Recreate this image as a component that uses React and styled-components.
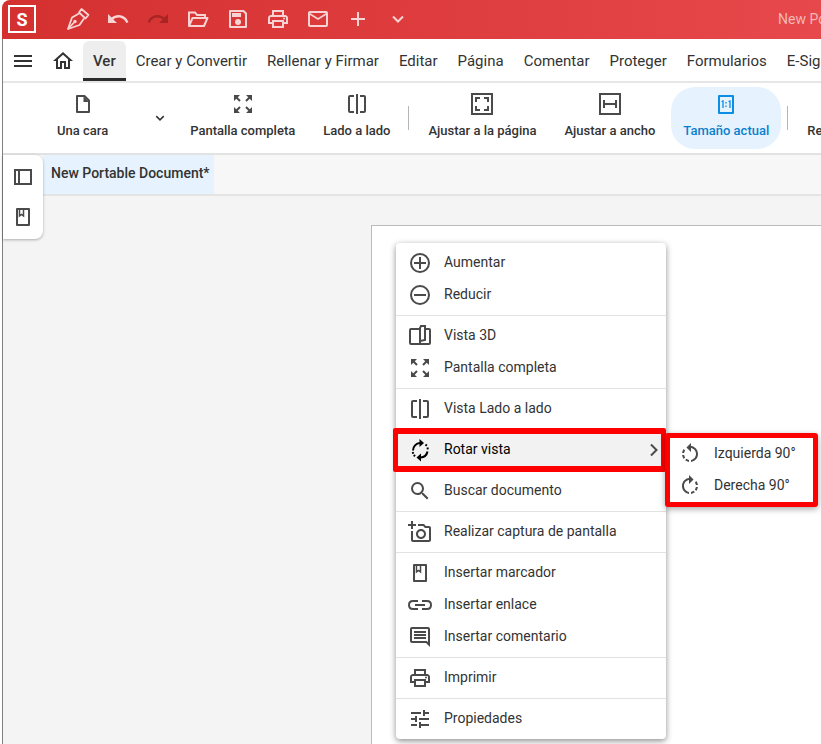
import styled, { createGlobalStyle, css } from "styled-components";
import {
  MdOutlineAddAPhoto,
  MdOutlineComment,
  MdOutlineHome,
  MdOutlineMail,
  MdOutlinePrint,
  MdRedo,
  MdRotateLeft,
  MdRotateRight,
  MdSearch,
  MdTune,
  MdUndo,
} from "react-icons/md";

const GlobalStyle = createGlobalStyle`
  * {
    box-sizing: border-box;
  }

  body {
    margin: 0;
    background: #ffffff;
    color: #333333;
    font-family: Roboto, "Liberation Sans", sans-serif;
    font-size: 14px;
    overflow: hidden;
  }

  button {
    margin: 0;
    padding: 0;
    border: 0;
    background: none;
    color: inherit;
    font: inherit;
    white-space: nowrap;
    cursor: pointer;
  }

  svg {
    display: block;
    flex: none;
  }
`;

/* ---------- icons ---------- */

const Svg = ({ size = 24, width = 2, children }) => (
  <svg
    width={size}
    height={size}
    viewBox="0 0 24 24"
    fill="none"
    stroke="currentColor"
    strokeWidth={width}
    aria-hidden="true"
  >
    {children}
  </svg>
);

const PenIcon = () => (
  <Svg width={1.8}>
    <path d="M15.5 2L22.5 8L19.500 11.500L13 5.500Z" strokeLinejoin="round" />
    <path d="M13 6.500L6 10.500L2 22L13.500 18L18 11.500" strokeLinejoin="round" />
    <path d="M2 22L8 15.500" />
    <circle cx="9" cy="14.5" r="1.700" fill="currentColor" stroke="none" />
  </Svg>
);

const FolderIcon = () => (
  <Svg>
    <path d="M3 19V5.5H9L11 8H19V11" />
    <path d="M3 19L6.5 11H21.5L18 19Z" strokeLinejoin="round" />
  </Svg>
);

const SaveIcon = () => (
  <Svg>
    <path d="M4 4H17.5L20 6.5V20H4Z" strokeLinejoin="round" />
    <path d="M6 6H15V10H6Z" fill="currentColor" stroke="none" />
    <circle cx="12" cy="15" r="3" fill="currentColor" stroke="none" />
  </Svg>
);

const PlusIcon = () => (
  <Svg>
    <path d="M12 5V19M5 12H19" />
  </Svg>
);

const ChevronDown = ({ size, width }) => (
  <Svg size={size} width={width}>
    <path d="M7 9.5L12 14.5L17 9.5" />
  </Svg>
);

const ChevronRight = () => (
  <Svg>
    <path d="M9 6.5L14.5 12L9 17.5" />
  </Svg>
);

const HamburgerIcon = () => (
  <Svg>
    <path d="M3 7H21M3 12H21M3 17H21" />
  </Svg>
);

const PageIcon = () => (
  <Svg>
    <path d="M6 4H13.5L18 8.5V20H6Z" strokeLinejoin="round" />
    <path d="M12.5 4V10H18Z" fill="currentColor" stroke="none" />
  </Svg>
);

const ExpandIcon = () => (
  <Svg>
    <path
      d="M3 3H9L3 9ZM21 3V9L15 3ZM3 21V15L9 21ZM21 21H15L21 15Z"
      fill="currentColor"
      stroke="none"
    />
    <path d="M5 5L9 9M19 5L15 9M5 19L9 15M19 19L15 15" />
  </Svg>
);

const SideIcon = () => (
  <Svg>
    <path d="M9 4H5Q4 4 4 5V19Q4 20 5 20H9M15 4H19Q20 4 20 5V19Q20 20 19 20H15" />
    <path d="M12 2V22" />
  </Svg>
);

const FitPageIcon = () => (
  <Svg>
    <path d="M2 2H22V22H2Z" />
    <path d="M6 10V6H10M14 6H18V10M18 14V18H14M10 18H6V14" />
  </Svg>
);

const FitWidthIcon = () => (
  <Svg>
    <path d="M2 2H22V22H2Z" />
    <path d="M6 8V16M18 8V16M6 12H18" />
  </Svg>
);

const ActualSizeIcon = () => (
  <Svg>
    <path d="M5 4H19V21H5Z" strokeLinejoin="round" />
    <path d="M7.5 9.5L9 9V16M14.5 9.5L16 9V16" strokeWidth="1.3" />
    <path d="M12 10V11.5M12 13.5V15" strokeWidth="1.3" />
  </Svg>
);

const ReflowIcon = () => (
  <Svg>
    <path d="M4 6H20M4 12H20M4 18H13" />
  </Svg>
);

const PanelIcon = () => (
  <Svg>
    <path d="M4 5H20V19H4Z" />
    <path d="M8 5V19" />
  </Svg>
);

const BookmarkIcon = () => (
  <Svg>
    <path d="M6 4H18V20H6Z" strokeLinejoin="round" />
    <path d="M8.5 5V11L10.5 9.5L12.5 11V5" strokeWidth="1.5" />
  </Svg>
);

const LinkIcon = () => (
  <Svg>
    <path d="M10 8H5Q1 8 1 12Q1 16 5 16H10M14 8H19Q23 8 23 12Q23 16 19 16H14" />
    <path d="M7 12H17" />
  </Svg>
);

const ZoomInIcon = () => (
  <Svg>
    <circle cx="12" cy="12" r="9" />
    <path d="M12 6V18M6 12H18" />
  </Svg>
);

const ZoomOutIcon = () => (
  <Svg>
    <circle cx="12" cy="12" r="9" />
    <path d="M6 12H18" />
  </Svg>
);

const View3dIcon = () => (
  <Svg>
    <path d="M12 5H3Q2 5 2 6V19Q2 20 3 20H21Q22 20 22 19V6Q22 5 21 5H18" />
    <path d="M12 20V4L13 2H17V16L12 17" />
  </Svg>
);

const RotateIcon = () => (
  <Svg width={2}>
    <path d="M5 12.5A7.5 7.5 0 0 1 12 5" />
    <path d="M11.5 1L16 5L11.5 9Z" fill="currentColor" stroke="none" />
    <path d="M19.5 13.5A7.5 7.5 0 0 1 12.5 19.5" />
    <path d="M13 15.500L8.500 19.500L13 23.500Z" fill="currentColor" stroke="none" />
    <path d="M17.500 6.500L18.800 7.800M19.500 9.500L19.800 11.300M4.700 14L5.200 15.800M5.800 17L7 18.300" />
  </Svg>
);

/* ---------- title bar ---------- */

const Window = styled.div`
  min-height: 100vh;
  margin-left: 2px;
  display: flex;
  flex-direction: column;
`;

const TitleBar = styled.header`
  height: 39px;
  padding: 0 0 1px 6px;
  display: flex;
  align-items: center;
  border-top-left-radius: 8px;
  background: linear-gradient(90deg, #d43030, #e7484b);
  color: #f9d3d3;
  overflow: hidden;
`;

const Logo = styled.div`
  width: 28px;
  height: 28px;
  margin-right: 22px;
  flex: none;
  display: flex;
  align-items: center;
  justify-content: center;
  border: 2px solid #ffffff;
  color: #ffffff;
  font-size: 18px;
  font-weight: 700;
`;

const TitleButton = styled.button`
  width: 40px;
  height: 38px;
  flex: none;
  display: flex;
  align-items: center;
  justify-content: center;
  ${(props) => props.disabled && "color: #a92525;"}
`;

const FileName = styled.span`
  margin-left: 360px;
  white-space: nowrap;
  color: #f4b6b7;
`;

/* ---------- menu bar ---------- */

const Body = styled.div`
  flex: 1;
  display: flex;
  flex-direction: column;
  border-left: 1px solid #808080;
`;

const MenuBar = styled.nav`
  height: 44px;
  padding-top: 2px;
  display: flex;
  border-bottom: 2px solid #e6e6e6;
  overflow: hidden;
`;

const MenuIconButton = styled.button`
  width: 40px;
  height: 40px;
  padding: 0 8px;
  flex: none;
  display: flex;
  align-items: center;
`;

const MenuTab = styled.button`
  height: 40px;
  padding: 0 10px;
  flex: none;
  font-size: 15px;

  ${(props) =>
    props.$active &&
    css`
      border-bottom: 3px solid #2b2b2b;
      border-radius: 6px 6px 0 0;
      padding-top: 2px;
      background: #eeeeee;
      font-weight: 500;
    `}
`;

/* ---------- ribbon ---------- */

const Ribbon = styled.div`
  height: 72px;
  padding: 4px 0 4px 42px;
  display: flex;
  align-items: center;
  gap: 4px;
  border-bottom: 2px solid #e2e2e2;
  overflow: hidden;
`;

const Tool = styled.button`
  height: 62px;
  padding: 5px 12px 0;
  flex: none;
  display: flex;
  flex-direction: column;
  align-items: center;
  gap: 7px;
  border-radius: 24px;
  font-size: 13px;
  font-weight: 500;
  line-height: 16px;

  svg {
    color: #4a4a4a;
  }

  ${(props) =>
    props.$active &&
    css`
      background: #e6f3fe;
      color: #0a7fce;

      svg {
        color: #0a8ee6;
      }
    `}
`;

const ToolChevron = styled.button`
  width: 50px;
  padding-left: 27px;
  flex: none;
`;

const Divider = styled.span`
  width: 1px;
  height: 24px;
  margin: 0 3px 0 2px;
  flex: none;
  background: #b5b5b5;
`;

/* ---------- document area ---------- */

const Workspace = styled.div`
  flex: 1;
  display: flex;
  flex-direction: column;
  position: relative;
  background: #f4f4f4;
`;

const DocumentTabs = styled.div`
  padding-left: 40px;
  display: flex;
  border-bottom: 2px solid #e4e4e4;
  background: #f7f7f7;
`;

const DocumentTab = styled.button`
  height: 39px;
  padding: 0 4px 4px 8px;
  background: #e6f3fe;
  font-weight: 500;
`;

const SidePanel = styled.aside`
  position: absolute;
  top: 0;
  left: 0;
  width: 40px;
  height: 84px;
  padding: 2px 8px;
  display: flex;
  flex-direction: column;
  border-radius: 0 8px 8px 0;
  background: #ffffff;
  color: #4a4a4a;
  box-shadow: 0 1px 3px rgba(0, 0, 0, 0.3);
`;

const SideButton = styled.button`
  height: 40px;
`;

const Paper = styled.main`
  flex: 1;
  margin: 29px 0 0 368px;
  padding: 17px 0 0 24px;
  border: solid #bbbbbb;
  border-width: 1px 0 0 1px;
  background: #ffffff;
`;

/* ---------- context menu ---------- */

const ContextMenu = styled.div`
  width: 270px;
  border-radius: 4px;
  background: #ffffff;
  box-shadow: 0 2px 6px rgba(0, 0, 0, 0.45);
`;

const MenuGroup = styled.div`
  padding: 4px 0;

  & + & {
    border-top: 1px solid #e2e2e2;
  }
`;

const ItemWrap = styled.div`
  position: relative;
`;

const MenuItem = styled.button`
  width: 100%;
  height: 32px;
  padding-left: 12px;
  display: flex;
  align-items: center;
  gap: 12px;
  text-align: left;

  svg {
    color: #4a4a4a;
  }

  ${(props) =>
    props.$active &&
    css`
      background: #f2f2f2;
      color: #000000;

      svg:first-child {
        color: #000000;
      }
    `}
`;

const ItemLabel = styled.span`
  flex: 1;
  padding-bottom: 2px;
`;

const Highlight = styled.div`
  position: absolute;
  inset: -6px 0 -6px -3px;
  border: solid #ff0000;
  border-width: 6px 5px;
  border-radius: 2px;
  pointer-events: none;
`;

const SubMenu = styled.div`
  position: absolute;
  top: -1px;
  left: 269px;
  width: 153px;
  padding-left: 8px;
  border: 5px solid #ff0000;
  border-radius: 3px;
  background: #ffffff;
  box-shadow: 0 2px 6px rgba(0, 0, 0, 0.35);

  ${MenuItem} {
    padding-left: 0;
  }
`;

const tabs = [
  "Ver",
  "Crear y Convertir",
  "Rellenar y Firmar",
  "Editar",
  "Página",
  "Comentar",
  "Proteger",
  "Formularios",
  "E-Sign",
];

const groups = [
  [
    { label: "Aumentar", icon: <ZoomInIcon /> },
    { label: "Reducir", icon: <ZoomOutIcon /> },
  ],
  [
    { label: "Vista 3D", icon: <View3dIcon /> },
    { label: "Pantalla completa", icon: <ExpandIcon /> },
  ],
  [{ label: "Vista Lado a lado", icon: <SideIcon /> }],
  [
    {
      label: "Rotar vista",
      icon: <RotateIcon />,
      children: [
        { label: "Izquierda 90°", icon: <MdRotateLeft size={24} /> },
        { label: "Derecha 90°", icon: <MdRotateRight size={24} /> },
      ],
    },
  ],
  [{ label: "Buscar documento", icon: <MdSearch size={24} /> }],
  [
    {
      label: "Realizar captura de pantalla",
      icon: <MdOutlineAddAPhoto size={24} />,
    },
  ],
  [
    { label: "Insertar marcador", icon: <BookmarkIcon /> },
    { label: "Insertar enlace", icon: <LinkIcon /> },
    { label: "Insertar comentario", icon: <MdOutlineComment size={24} /> },
  ],
  [{ label: "Imprimir", icon: <MdOutlinePrint size={24} /> }],
  [{ label: "Propiedades", icon: <MdTune size={24} /> }],
];

const Item = ({ item }) => {
  return (
    <ItemWrap>
      <MenuItem $active={Boolean(item.children)}>
        {item.icon}
        <ItemLabel>{item.label}</ItemLabel>
        {item.children && <ChevronRight />}
      </MenuItem>
      {item.children && (
        <>
          <Highlight />
          <SubMenu>
            {item.children.map((child) => (
              <MenuItem key={child.label}>
                {child.icon}
                <ItemLabel>{child.label}</ItemLabel>
              </MenuItem>
            ))}
          </SubMenu>
        </>
      )}
    </ItemWrap>
  );
};

const App = () => {
  return (
    <>
      <GlobalStyle />
      <Window>
        <TitleBar>
          <Logo>S</Logo>
          <TitleButton aria-label="Firmar"><PenIcon /></TitleButton>
          <TitleButton aria-label="Deshacer"><MdUndo size={24} /></TitleButton>
          <TitleButton aria-label="Rehacer" disabled><MdRedo size={24} /></TitleButton>
          <TitleButton aria-label="Abrir"><FolderIcon /></TitleButton>
          <TitleButton aria-label="Guardar"><SaveIcon /></TitleButton>
          <TitleButton aria-label="Imprimir"><MdOutlinePrint size={24} /></TitleButton>
          <TitleButton aria-label="Correo"><MdOutlineMail size={24} /></TitleButton>
          <TitleButton aria-label="Añadir"><PlusIcon /></TitleButton>
          <TitleButton aria-label="Más"><ChevronDown /></TitleButton>
          <FileName>New Portable Document*</FileName>
        </TitleBar>
        <Body>
          <MenuBar>
            <MenuIconButton aria-label="Menú"><HamburgerIcon /></MenuIconButton>
            <MenuIconButton aria-label="Inicio"><MdOutlineHome size={24} /></MenuIconButton>
            {tabs.map((tab) => (
              <MenuTab key={tab} $active={tab === "Ver"}>{tab}</MenuTab>
            ))}
          </MenuBar>
          <Ribbon>
            <Tool><PageIcon />Una cara</Tool>
            <ToolChevron aria-label="Opciones de página">
              <ChevronDown size={18} />
            </ToolChevron>
            <Tool><ExpandIcon />Pantalla completa</Tool>
            <Tool><SideIcon />Lado a lado</Tool>
            <Divider />
            <Tool><FitPageIcon />Ajustar a la página</Tool>
            <Tool><FitWidthIcon />Ajustar a ancho</Tool>
            <Tool $active><ActualSizeIcon />Tamaño actual</Tool>
            <Divider />
            <Tool><ReflowIcon />Redistribuir</Tool>
          </Ribbon>
          <Workspace>
            <DocumentTabs>
              <DocumentTab>New Portable Document*</DocumentTab>
            </DocumentTabs>
            <SidePanel>
              <SideButton aria-label="Páginas"><PanelIcon /></SideButton>
              <SideButton aria-label="Marcadores"><BookmarkIcon /></SideButton>
            </SidePanel>
            <Paper>
              <ContextMenu>
                {groups.map((group) => (
                  <MenuGroup key={group[0].label}>
                    {group.map((item) => (
                      <Item key={item.label} item={item} />
                    ))}
                  </MenuGroup>
                ))}
              </ContextMenu>
            </Paper>
          </Workspace>
        </Body>
      </Window>
    </>
  );
};

export default App;
